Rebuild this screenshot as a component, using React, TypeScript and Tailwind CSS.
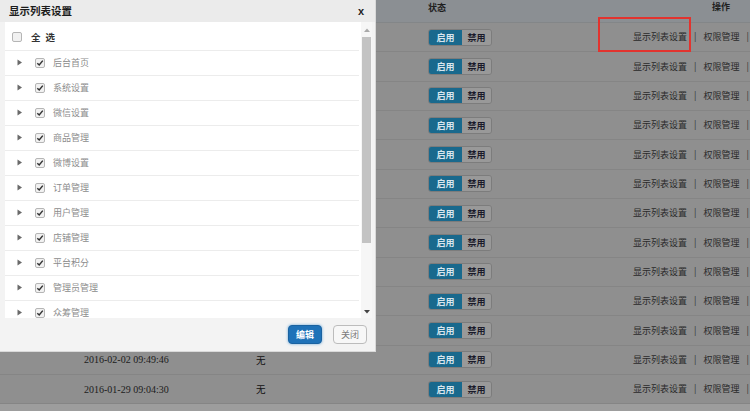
import React from "react";

const rows = Array.from({ length: 13 }, (_, i) => i);
const items = [
  "后台首页",
  "系统设置",
  "微信设置",
  "商品管理",
  "微博设置",
  "订单管理",
  "用户管理",
  "店铺管理",
  "平台积分",
  "管理员管理",
  "众筹管理",
];

function Check({ checked }: { checked: boolean }) {
  return (
    <div className="w-[10px] h-[10px] rounded-[2px] border border-[#b5b5b5] bg-[#f1f1f1] flex items-center justify-center">
      {checked && (
        <svg width="8" height="8" viewBox="0 0 8 8">
          <path d="M1.3 4.2 L3.2 6 L6.8 1.6" stroke="#333" strokeWidth="1.5" fill="none" />
        </svg>
      )}
    </div>
  );
}

export default function App() {
  return (
    <div className="relative w-[750px] h-[411px] overflow-hidden bg-[#9d9d9d] font-['Noto_Sans_CJK_SC','Noto_Sans',sans-serif]">
      {/* background table */}
      <div className="flex flex-col">
        <div className="h-[23px] bg-[#8b8f93] border-b border-[#838688] flex items-start pt-[1px] text-[9px] font-bold text-[#1e1e1e]">
          <div className="w-[428px]" />
          <div className="leading-[14px]">状态</div>
          <div className="flex-1" />
          <div className="leading-[12px] pr-[20px]">操作</div>
        </div>
        {rows.map((i) => (
          <div
            key={i}
            className="h-[29.33px] bg-[#8f8f8f] border-b border-[#858585] flex items-center text-[#1c1c1c]"
          >
            <div className="w-[84px]" />
            <div className="w-[172px] text-[10px] font-['Liberation_Serif',serif]">
              {i === 11 ? "2016-02-02 09:49:46" : i === 12 ? "2016-01-29 09:04:30" : ""}
            </div>
            <div className="w-[172px] text-[9.5px] text-[#111]">{i >= 11 ? "无" : ""}</div>
            <div className="flex h-[17px] w-[64px] rounded-[3px] overflow-hidden border border-[#7c7c7c] text-[9px] font-bold leading-none">
              <div className="w-[33px] bg-[#19698d] text-[#d8e6ee] flex items-center justify-center">启用</div>
              <div className="flex-1 bg-[#999999] text-[#1a1a2a] flex items-center justify-center">禁用</div>
            </div>
            <div className="flex-1 flex justify-end items-center gap-[7px] pr-[1px] text-[9px] text-[#2a2a2a]">
              <span>显示列表设置</span>
              <span className="text-[#333]">|</span>
              <span>权限管理</span>
              <span className="text-[#333]">|</span>
            </div>
          </div>
        ))}
      </div>

      {/* red highlight */}
      <div className="absolute left-[598px] top-[17px] w-[93px] h-[35px] border-2 border-[#e2332e]" />

      {/* dialog */}
      <div className="absolute left-0 top-0 w-[376px] h-[352px] bg-[#f3f3f3] border-r border-b border-[#d9d9d9] flex flex-col">
        <div className="h-[22px] bg-[#ebebeb] flex items-center justify-between pl-[9px] pr-[11px]">
          <span className="text-[10.5px] font-bold text-[#1b1b1b]">显示列表设置</span>
          <span className="text-[11px] font-bold text-[#222] font-['Liberation_Sans',sans-serif]">x</span>
        </div>
        <div className="h-[296px] ml-[5px] mr-[3px] bg-white flex overflow-hidden">
          <div className="flex-1 pt-[3px] mr-[2px]">
            <div className="h-[25.5px] border-b border-[#ececec] flex items-center pl-[7px]">
              <Check checked={false} />
              <span className="ml-[9px] text-[9.5px] font-bold text-[#333] tracking-[5px]">全选</span>
            </div>
            {items.map((t) => (
              <div key={t} className="h-[25px] border-b border-[#ececec] flex items-center pl-[12px]">
                <svg width="6" height="7" viewBox="0 0 6 7">
                  <path d="M0.5 0.5 L5 3.5 L0.5 6.5 Z" fill="#6a6a6a" />
                </svg>
                <div className="ml-[12px]">
                  <Check checked={true} />
                </div>
                <span className="ml-[8px] text-[9px] text-[#8c8c8c]">{t}</span>
              </div>
            ))}
          </div>
          <div className="w-[11px] bg-[#f6f6f6] flex flex-col items-center">
            <div className="h-[15px] flex items-center justify-center">
              <svg width="6" height="4" viewBox="0 0 6 4">
                <path d="M0 4 L3 0.5 L6 4 Z" fill="#a9a9a9" />
              </svg>
            </div>
            <div className="w-[9px] h-[206px] bg-[#c3c3c3]" />
            <div className="flex-1" />
            <div className="h-[12px] flex items-center justify-center">
              <svg width="6" height="4" viewBox="0 0 6 4">
                <path d="M0 0 L3 3.5 L6 0 Z" fill="#444" />
              </svg>
            </div>
          </div>
        </div>
        <div className="flex-1 flex justify-end items-center gap-[11px] pr-[8px]">
          <div className="w-[34px] h-[19px] rounded-[4px] bg-[#1f72b8] shadow-[0_0_3px_#6aa6d8] border border-[#1a62a0] text-white text-[9px] font-bold flex items-center justify-center">
            编辑
          </div>
          <div className="w-[34px] h-[19px] rounded-[4px] bg-[#f7f7f7] border border-[#bcbcbc] text-[#7a7a7a] text-[9px] flex items-center justify-center">
            关闭
          </div>
        </div>
      </div>
    </div>
  );
}
